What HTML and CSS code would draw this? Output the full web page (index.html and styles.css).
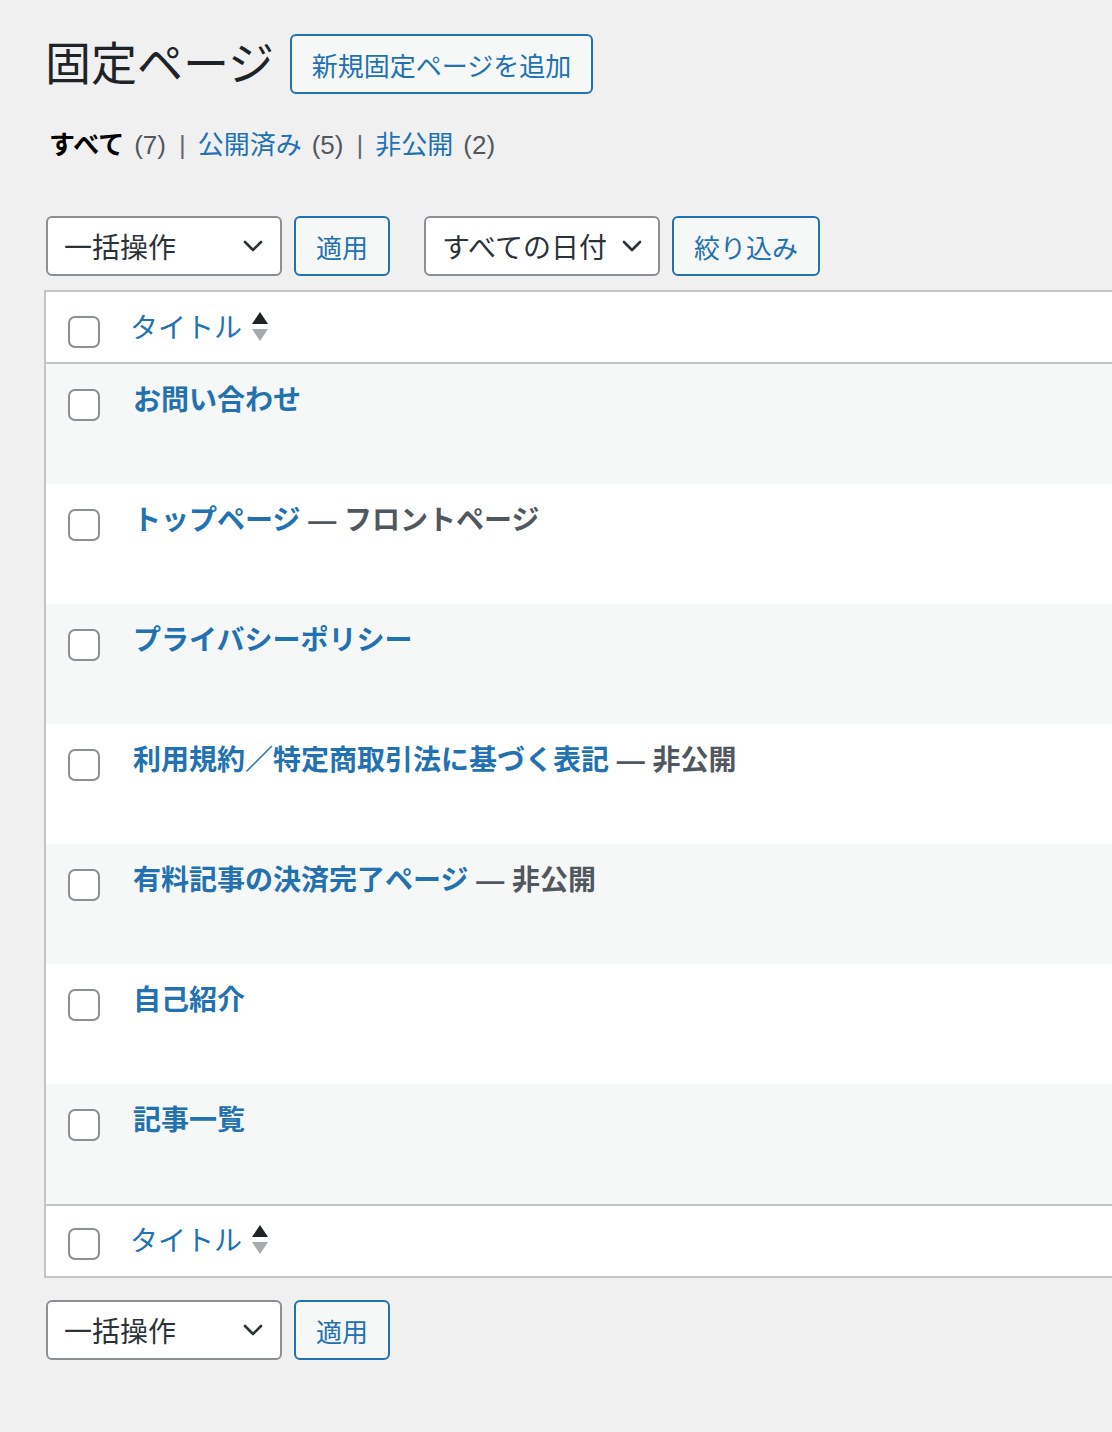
FILE: index.html
```html
<!DOCTYPE html>
<html lang="ja">
<head>
<meta charset="utf-8">
<title>固定ページ</title>
<link rel="stylesheet" href="styles.css">
</head>
<body>
<div class="wrap">
  <div class="title-bar">
    <h1 class="page-title">固定ページ</h1>
    <a class="btn btn-add" href="#">新規固定ページを追加</a>
  </div>

  <ul class="subsubsub">
    <li><span class="current">すべて</span><span class="count">(7)</span><span class="sep">|</span></li>
    <li><a href="#">公開済み</a><span class="count">(5)</span><span class="sep">|</span></li>
    <li><a href="#">非公開</a><span class="count">(2)</span></li>
  </ul>

  <div class="tablenav">
    <div class="select select-bulk"><span>一括操作</span>
      <svg class="chev" viewBox="0 0 20 12" width="20" height="12"><path d="M2 2 L10 10 L18 2" fill="none" stroke="#2c3338" stroke-width="2.6" stroke-linecap="round" stroke-linejoin="round"/></svg>
    </div>
    <button class="btn btn-apply">適用</button>
    <div class="select select-date"><span>すべての日付</span>
      <svg class="chev" viewBox="0 0 20 12" width="20" height="12"><path d="M2 2 L10 10 L18 2" fill="none" stroke="#2c3338" stroke-width="2.6" stroke-linecap="round" stroke-linejoin="round"/></svg>
    </div>
    <button class="btn btn-filter">絞り込み</button>
  </div>

  <table class="list">
    <thead>
      <tr class="head-row">
        <th class="check"><span class="cb"></span></th>
        <th class="col-title"><a href="#">タイトル</a><svg class="sort" viewBox="0 0 18 32" width="18" height="32"><path d="M9 1 L17 13 L1 13 Z" fill="#1d2327"/><path d="M1 18 L17 18 L9 30 Z" fill="#a7aaad"/></svg></th>
      </tr>
    </thead>
    <tbody>
      <tr class="alt"><td class="check"><span class="cb"></span></td><td class="title"><a href="#">お問い合わせ</a></td></tr>
      <tr><td class="check"><span class="cb"></span></td><td class="title"><a href="#">トップページ</a><span class="state"> — フロントページ</span></td></tr>
      <tr class="alt"><td class="check"><span class="cb"></span></td><td class="title"><a href="#">プライバシーポリシー</a></td></tr>
      <tr><td class="check"><span class="cb"></span></td><td class="title"><a href="#">利用規約／特定商取引法に基づく表記</a><span class="state"> — 非公開</span></td></tr>
      <tr class="alt"><td class="check"><span class="cb"></span></td><td class="title"><a href="#">有料記事の決済完了ページ</a><span class="state"> — 非公開</span></td></tr>
      <tr><td class="check"><span class="cb"></span></td><td class="title"><a href="#">自己紹介</a></td></tr>
      <tr class="alt"><td class="check"><span class="cb"></span></td><td class="title"><a href="#">記事一覧</a></td></tr>
    </tbody>
    <tfoot>
      <tr class="foot-row">
        <th class="check"><span class="cb"></span></th>
        <th class="col-title"><a href="#">タイトル</a><svg class="sort" viewBox="0 0 18 32" width="18" height="32"><path d="M9 1 L17 13 L1 13 Z" fill="#1d2327"/><path d="M1 18 L17 18 L9 30 Z" fill="#a7aaad"/></svg></th>
      </tr>
    </tfoot>
  </table>

  <div class="tablenav bottom">
    <div class="select select-bulk"><span>一括操作</span>
      <svg class="chev" viewBox="0 0 20 12" width="20" height="12"><path d="M2 2 L10 10 L18 2" fill="none" stroke="#2c3338" stroke-width="2.6" stroke-linecap="round" stroke-linejoin="round"/></svg>
    </div>
    <button class="btn btn-apply">適用</button>
  </div>
</div>
</body>
</html>
```

FILE: styles.css
```css
html, body {
  margin: 0;
  padding: 0;
  overflow: hidden;
}
body {
  background: #f0f0f1;
  color: #3c434a;
  font-family: "Liberation Sans", "Noto Sans CJK JP", sans-serif;
  width: 1112px;
  height: 1432px;
}
a { text-decoration: none; color: #2271b1; }

.wrap {
  padding: 34px 0 0 44px;
}

.title-bar {
  display: flex;
  align-items: center;
  height: 60px;
}
.page-title {
  margin: 0 0 0 1px;
  font-size: 46px;
  font-weight: 400;
  color: #1d2327;
  line-height: 60px;
}

.btn {
  box-sizing: border-box;
  display: inline-flex;
  align-items: center;
  justify-content: center;
  height: 60px;
  border: 2px solid #2271b1;
  border-radius: 6px;
  background: #f6f7f7;
  color: #2271b1;
  font-family: "Liberation Sans", "Noto Sans CJK JP", sans-serif;
  font-size: 26px;
  padding: 0;
  cursor: pointer;
}
.btn-add {
  margin-left: 16px;
  width: 303px;
}
.btn-apply { width: 96px; margin-left: 12px; }
.btn-filter { width: 148px; margin-left: 12px; }

.subsubsub {
  list-style: none;
  margin: 25px 0 0 5px;
  padding: 0;
  display: flex;
  font-size: 26px;
  line-height: 52px;
  color: #50575e;
}
.subsubsub li { white-space: nowrap; }
.subsubsub .current { color: #000; font-weight: 700; }
.subsubsub .count { color: #50575e; margin-left: 10px; }
.subsubsub .sep { color: #646970; margin: 0 12px 0 13px; }

.tablenav {
  display: flex;
  align-items: center;
  margin: 45px 0 0 2px;
  height: 60px;
}
.tablenav.bottom { margin-top: 22px; }

.select {
  box-sizing: border-box;
  height: 60px;
  width: 236px;
  border: 2px solid #8c8f94;
  border-radius: 6px;
  background: #fff;
  display: flex;
  align-items: center;
  justify-content: space-between;
  padding: 0 16px 0 16px;
  font-size: 28px;
  color: #2c3338;
}
.select-bulk .chev { margin-right: 1px; }
.select-date { margin-left: 34px; padding-right: 16px; }
.chev { display: block; }

.list {
  margin-top: 14px;
  width: 1200px;
  border: 2px solid #c3c4c7;
  border-collapse: separate;
  border-spacing: 0;
  background: #fff;
  table-layout: fixed;
}
.list th, .list td {
  padding: 0;
  text-align: left;
  vertical-align: top;
  font-weight: 400;
}
.list .check {
  width: 86px;
  box-sizing: border-box;
  padding-left: 22px;
}
.cb {
  display: block;
  box-sizing: border-box;
  width: 32px;
  height: 32px;
  border: 2px solid #8c8f94;
  border-radius: 7px;
  background: #fff;
}

.head-row, .foot-row { height: 72px; }
.head-row th { border-bottom: 2px solid #c3c4c7; }
.foot-row th { border-top: 2px solid #c3c4c7; }
.head-row .check { padding-top: 24px; }
.foot-row .check { padding-top: 22px; }

.col-title {
  font-size: 28px;
  line-height: 40px;
  padding-left: 0;
  white-space: nowrap;
}
.head-row .col-title { padding-top: 15px; }
.foot-row .col-title { padding-top: 14px; }
.col-title a { color: #2271b1; vertical-align: middle; margin-left: -2px; }
.sort {
  vertical-align: middle;
  margin-left: 9px;
  position: relative;
  top: -2px;
}

tbody tr { height: 120px; }
tbody tr.alt { background: #f6f7f7; }
tbody .check { padding-top: 25px; }
tbody .title {
  padding-top: 17px;
  padding-left: 1px;
  font-size: 28px;
  line-height: 40px;
  font-weight: 700;
  white-space: nowrap;
}
tbody .title a { color: #2271b1; }
tbody .state { color: #50575e; }
```
